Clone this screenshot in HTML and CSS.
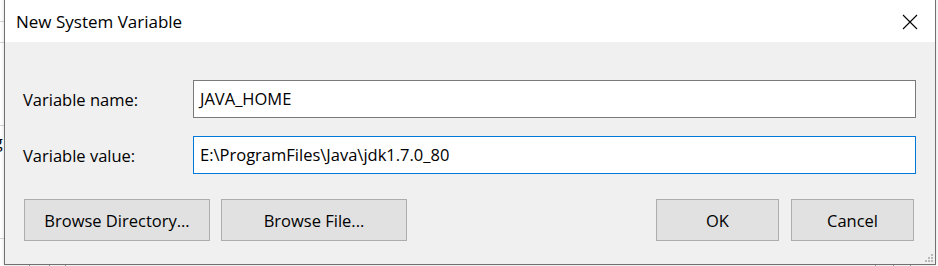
FILE: index.html
```html
<!DOCTYPE html>
<html>
    <head>
        <meta charset="utf-8">
        <title>New System Variable</title>
        <link rel="stylesheet" href="styles.css">
    </head>
    <body>
        <div class="desktop">
            <!-- bits of the window behind the dialog -->
            <div class="behind">
                <div class="hline" style="top: 21px"></div>
                <div class="hline" style="top: 42px"></div>
                <div class="hline" style="top: 125px"></div>
                <div class="hline" style="top: 238px"></div>
                <span class="behind_g">g</span>
                <div class="vline" style="left: 29px"></div>
                <div class="vline" style="left: 49px"></div>
                <div class="vline" style="left: 65px"></div>
                <div class="vline" style="left: 875px"></div>
                <div class="vline" style="left: 893px"></div>
                <div class="vline" style="left: 910px"></div>
            </div>

            <div class="dialog">
                <div class="titlebar">
                    <span class="title">New System Variable</span>
                    <span class="close">
                        <svg width="16" height="16" viewBox="0 0 16 16">
                            <path d="M1 1 L15 15 M15 1 L1 15" stroke="#000" stroke-width="1.1" fill="none"/>
                        </svg>
                    </span>
                </div>
                <div class="content">
                    <div class="fields">
                        <label class="field_label">Variable name:</label>
                        <div class="textbox">JAVA_HOME</div>
                        <label class="field_label">Variable value:</label>
                        <div class="textbox focused">E:\ProgramFiles\Java\jdk1.7.0_80</div>
                    </div>
                    <div class="buttons">
                        <div class="button_group">
                            <div class="btn wide">Browse Directory...</div>
                            <div class="btn wide">Browse File...</div>
                        </div>
                        <div class="button_group">
                            <div class="btn">OK</div>
                            <div class="btn">Cancel</div>
                        </div>
                    </div>
                    <svg class="grip" width="10" height="10" viewBox="0 0 10 10">
                        <rect x="7" y="1" width="2" height="2" fill="#b8b8b8"/>
                        <rect x="4" y="4" width="2" height="2" fill="#b8b8b8"/>
                        <rect x="7" y="4" width="2" height="2" fill="#b8b8b8"/>
                        <rect x="1" y="7" width="2" height="2" fill="#b8b8b8"/>
                        <rect x="4" y="7" width="2" height="2" fill="#b8b8b8"/>
                        <rect x="7" y="7" width="2" height="2" fill="#b8b8b8"/>
                    </svg>
                </div>
            </div>
        </div>
    </body>
</html>
```

FILE: styles.css
```css
html, body {
    margin: 0;
    padding: 0;
}
body {
    font-family: "Open Sans", "Noto Sans", sans-serif;
    color: #000000;
    background: #ffffff;
}
.desktop {
    position: relative;
    width: 938px;
    height: 266px;
    overflow: hidden;
}
.behind .hline {
    position: absolute;
    left: 0;
    width: 4px;
    height: 1px;
    background: #d6d6d6;
}
.behind .vline {
    position: absolute;
    top: 265px;
    width: 1px;
    height: 2px;
    background: #a0a0a0;
}
.behind_g {
    position: absolute;
    left: -6px;
    top: 132px;
    font-size: 16px;
    line-height: 20px;
}

/* the dialog window */
.dialog {
    position: absolute;
    left: 4px;
    top: -1px;
    width: 930px;
    height: 264px;
    border: 1px solid #707070;
    display: flex;
    flex-direction: column;
    background: #f0f0f0;
    box-shadow: 0 0 4px rgba(0,0,0,0.15);
}
.titlebar {
    height: 42px;
    background: #ffffff;
    display: flex;
    align-items: center;
    justify-content: space-between;
    padding: 0 17px 0 11px;
}
.title {
    font-size: 17px;
}
.close {
    display: flex;
    padding-top: 1px;
}
.content {
    flex: 1;
    position: relative;
    padding: 38px 19px 0 18px;
}
.fields {
    display: grid;
    grid-template-columns: 170px 1fr;
    row-gap: 18px;
    align-items: center;
}
.field_label {
    font-size: 16.5px;
}
.textbox {
    height: 36px;
    border: 1px solid #7a7a7a;
    background: #ffffff;
    font-size: 16.5px;
    line-height: 36px;
    padding: 0 6px;
    white-space: nowrap;
}
.textbox.focused {
    border-color: #0078d7;
}
.buttons {
    display: flex;
    justify-content: space-between;
    margin-top: 25px;
    padding: 0 2px 0 1px;
}
.button_group {
    display: flex;
    gap: 11px;
}
.button_group + .button_group {
    gap: 12px;
}
.btn {
    width: 121px;
    height: 40px;
    border: 1px solid #adadad;
    background: #e1e1e1;
    font-size: 16.5px;
    display: flex;
    align-items: center;
    justify-content: center;
}
.btn.wide {
    width: 184px;
}
.grip {
    position: absolute;
    right: 1px;
    bottom: 1px;
}
```
